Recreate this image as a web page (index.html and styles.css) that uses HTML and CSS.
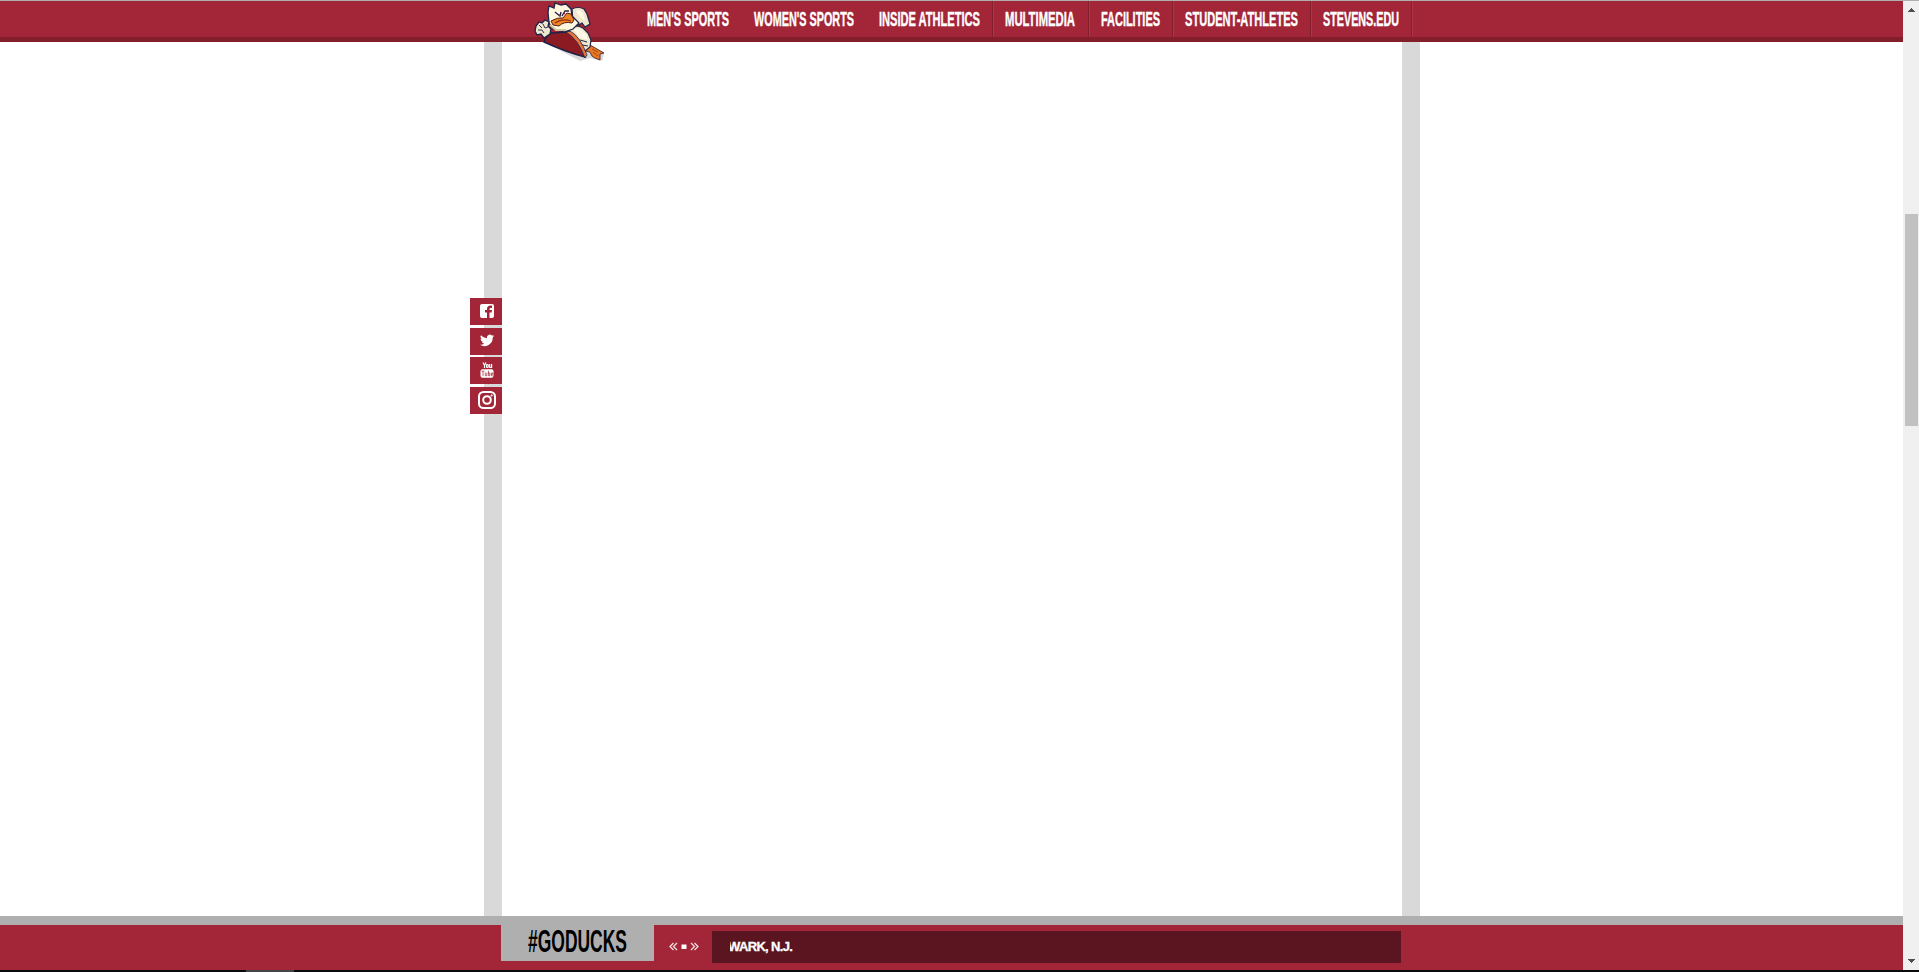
FILE: index.html
```html
<!DOCTYPE html>
<html lang="en">
<head>
<meta charset="utf-8">
<title>Stevens Athletics</title>
<link rel="stylesheet" href="styles.css">
</head>
<body>
<div class="window">
  <div class="page">
    <header class="topbar">
      <nav class="nav">
        <a class="item"><svg width="82" height="24"><text x="0" y="17" transform="scale(.6 1)" textLength="136.700" lengthAdjust="spacingAndGlyphs">MEN'S SPORTS</text></svg></a>
        <a class="item"><svg width="100" height="24"><text x="0" y="17" transform="scale(.6 1)" textLength="166.700" lengthAdjust="spacingAndGlyphs">WOMEN'S SPORTS</text></svg></a>
        <a class="item line"><svg width="101" height="24"><text x="0" y="17" transform="scale(.6 1)" textLength="168.300" lengthAdjust="spacingAndGlyphs">INSIDE ATHLETICS</text></svg></a>
        <a class="item line"><svg width="71" height="24"><text x="0" y="17" transform="scale(.6 1)" textLength="116.700" lengthAdjust="spacingAndGlyphs">MULTIMEDIA</text></svg></a>
        <a class="item line"><svg width="59" height="24"><text x="0" y="17" transform="scale(.6 1)" textLength="98.300" lengthAdjust="spacingAndGlyphs">FACILITIES</text></svg></a>
        <a class="item line"><svg width="113" height="24"><text x="0" y="17" transform="scale(.6 1)" textLength="188.300" lengthAdjust="spacingAndGlyphs">STUDENT-ATHLETES</text></svg></a>
        <a class="item line"><svg width="76" height="24"><text x="0" y="17" transform="scale(.6 1)" textLength="126.700" lengthAdjust="spacingAndGlyphs">STEVENS.EDU</text></svg></a>
      </nav>
      <svg class="duck" viewBox="0 0 80 62" width="80" height="62">
        <path d="M16 43L50 61 60 58 72 61 74 54 60 48Z" fill="#000" opacity=".15"/>
        <path d="M56 46l4-1 14 8-4 1 0 6-5-2-3-2-2-4-5-1z" fill="#e87722" stroke="#4a2a2a" stroke-width=".9"/>
        <path d="M62 49l6 3M63 52l5 4" stroke="#8d3d16" stroke-width=".8"/>
        <path d="M38 28Q46 24 53 28L58 33 61 40 60 47 55 51 46 44Z" fill="#efe8cf" stroke="#1f2348" stroke-width="1.200"/>
        <path d="M42 28l8 1 6 5 2 6-8-2z" fill="#fff9e5"/>
        <path d="M50 40l7 2M52 45l6 1" stroke="#1f2348" stroke-width="1"/>
        <path d="M14 42Q17 34 22 33L37 32 45 36 51 46 55 57Q36 52 14 42Z" fill="#8c1a22" stroke="#1f2348" stroke-width="1.500"/>
        <path d="M40 31Q50 36 57 55L55 58Q48 39 36 32Z" fill="#e8763c" stroke="#1f2348" stroke-width=".8"/>
        <path d="M42 9Q48 6 54 9L57 14 60 24 55 27 52 23 49 25 43 22Z" fill="#efe8cf" stroke="#1f2348" stroke-width="1.200"/>
        <path d="M46 11q5-2 7 2l2 8-5-4z" fill="#fff9e5"/>
        <path d="M18 12L19 6 24 8 25 3 31 5 36 4 41 9 42 16 49 23 43 29 34 32 23 29 19 23Z" fill="#fff8df" stroke="#1f2348" stroke-width="1.300"/>
        <path d="M20 25l6 5 10 0" stroke="#d2c69e" stroke-width="2" fill="none"/>
        <path d="M21 21Q28 17 33 18L37 13 41 14 44 20 42 23Q34 21 29 26L23 25Z" fill="#ef8322" stroke="#54211b" stroke-width="1"/>
        <path d="M25 23q7-5 16-2" fill="none" stroke="#8a3518" stroke-width="1.200"/>
        <path d="M25 12l5 4 1-4M32 16l3-5 4 0" fill="#fff" stroke="#272246" stroke-width="1.400"/>
        <path d="M29 15l1 1M34 14l1-1" stroke="#ac202d" stroke-width="1.500"/>
        <path d="M6 26L9 22 12 23 15 20 19 22 18 26 21 29 20 34 14 38 11 34 7 35 5 31Z" fill="#efe8cf" stroke="#1f2348" stroke-width="1.300"/>
        <path d="M9 25l3 3M13 24l2 4 3-1M8 30l4 0 2 3" stroke="#1f2348" stroke-width=".9" fill="none"/>
      </svg>
    </header>
    <main class="content">
      <div class="frame"></div>
      <aside class="social">
        <a><svg width="32" height="27"><rect x="10" y="6" width="14" height="14" rx="2" fill="#fff"/><path d="M17 20v-5.500h-2V12h2v-1q0-3.500 3.500-3.500H22V10h-1.200q-1.300 0-1.300 1.300v.7H22l-.4 2.500h-2.100V20z" fill="#a22638"/></svg></a>
        <a><svg width="32" height="27"><path transform="translate(10 5.300) scale(.59)" fill="#fff" d="M24 4.600a10 10 0 0 1-2.800.8 5 5 0 0 0 2.100-2.700 10 10 0 0 1-3.100 1.200 4.900 4.900 0 0 0-8.400 4.500A14 14 0 0 1 1.700 3.200a4.900 4.900 0 0 0 1.500 6.500 4.900 4.900 0 0 1-2.200-.6 4.900 4.900 0 0 0 3.900 4.900 5 5 0 0 1-2.200.1 4.900 4.900 0 0 0 4.600 3.400A10 10 0 0 1 0 19.500 14 14 0 0 0 21.500 7.100 10 10 0 0 0 24 4.600z"/></svg></a>
        <a><svg width="32" height="27"><g fill="none" stroke="#fff" stroke-width="1.200"><path d="M13 5.500l1.500 2.800L16 5.500M14.500 8v3M19.700 7v3.500h1.900V7"/><rect x="16.500" y="7.500" width="1.700" height="3" rx=".8"/></g><rect x="10.500" y="12.300" width="13" height="8.500" rx="2" fill="#fff"/><path d="M11.500 14.200h3M13 14.200v4.800M15.300 15.500v3.200h1.600v-3.200M18.500 13.800v4.900h1.300V16h-1.300M22.700 18.700h-1.400V16h1.400v1.300h-1.400" fill="none" stroke="#a22638" stroke-width=".7"/></svg></a>
        <a><svg width="32" height="27" fill="none" stroke="#fff"><rect x="9" y="5" width="16" height="16" rx="4.500" stroke-width="2"/><circle cx="17" cy="13" r="3.800" stroke-width="2"/><circle cx="21.600" cy="8.500" r="1" fill="#fff" stroke="none"/></svg></a>
      </aside>
    </main>
    <footer class="bottombar">
      <div class="tag"><svg width="102" height="36"><text x="0" y="27" transform="scale(.58 1)" textLength="170.700" lengthAdjust="spacingAndGlyphs">#GODUCKS</text></svg></div>
      <svg class="controls" width="30" height="9" fill="none" stroke="#fff" stroke-width="1.300"><path d="M4.500 1L1 4.500 4.500 8M8 1L4.500 4.500 8 8M22 1l3.500 3.500L22 8M25.500 1L29 4.500 25.500 8" opacity=".85"/><rect x="12.500" y="2.500" width="5" height="4.500" fill="#fff" stroke="none"/></svg>
      <div class="ticker"><div class="clip"><span>WARK, N.J.</span></div></div>
    </footer>
  </div>
  <div class="scrollbar">
    <svg width="16" height="17"><path d="M8 7h1v1h1v1h1v1h1v1H5v-1h1V9h1V8h1z" fill="#505050"/></svg>
    <div class="thumb"></div>
    <svg class="down" width="16" height="17"><path d="M5 6h7v1h-1v1h-1v1H9v1H8V9H7V8H6V7H5z" fill="#505050"/></svg>
  </div>
</div>
<div class="taskbar"><div class="running"></div></div>
</body>
</html>
```
FILE: styles.css
```css
* { box-sizing: border-box; }
body { margin: 0; height: 972px; overflow: hidden; display: flex; flex-direction: column; background: #fff; font-family: "Liberation Sans", Arial, sans-serif; }
svg { display: block; flex: none; overflow: visible; }
.window { height: 970px; display: flex; border-top: 1px solid #afafaf; }
.page { width: 1903px; display: flex; flex-direction: column; }
.topbar { position: relative; height: 41px; background: #a22638; border-bottom: 5px solid #841e2b; }
.nav { display: flex; height: 36px; padding-left: 634px; }
.item { display: flex; padding: 8px 12px 0 13px; }
.item.line { border-right: 1px solid #841e2b; box-shadow: 1px 0 #ad3548; }
.item.line + .line { padding-left: 12px; }
.item text { font: bold 19.500px "Liberation Sans", Arial, sans-serif; fill: #fff; stroke: #fff; stroke-width: .4px; }
.duck { position: absolute; left: 530px; top: -1px; }
.content { position: relative; flex: 1; display: flex; justify-content: center; }
.frame { width: 936px; margin-left: 1px; border: solid #d9d9d9; border-width: 0 18px; }
.social { position: absolute; left: 470px; top: 256px; width: 32px; display: flex; flex-direction: column; }
.social a { height: 29.670px; }
.social svg { background: #a22638; }
.bottombar { height: 54px; display: flex; align-items: flex-start; background: #a22638; border-top: 9px solid #afafaf; padding-left: 501px; }
.tag { width: 153px; height: 36px; padding-left: 27px; background: #afafaf; }
.tag text { font: bold 32px "Liberation Sans", Arial, sans-serif; fill: #000; }
.controls { margin: 17px 0 0 15px; }
.ticker { width: 689px; height: 32px; margin: 6px 0 0 13px; padding-left: 18px; background: #5a1520; }
.clip { overflow: hidden; height: 32px; line-height: 31px; color: #fff; font-size: 13px; font-weight: bold; }
.clip span { display: block; margin-left: -2px; letter-spacing: -.65px; -webkit-text-stroke: .3px #fff; }
.scrollbar { width: 16px; display: flex; flex-direction: column; background: #f0f0f0; }
.thumb { width: 13px; height: 212px; margin: 196px 0 0 2px; background: #c1c1c1; }
.down { margin-top: auto; }
.taskbar { height: 2px; padding-left: 246px; background: #0b0b0b; }
.running { width: 48px; height: 2px; background: #444; }
```
